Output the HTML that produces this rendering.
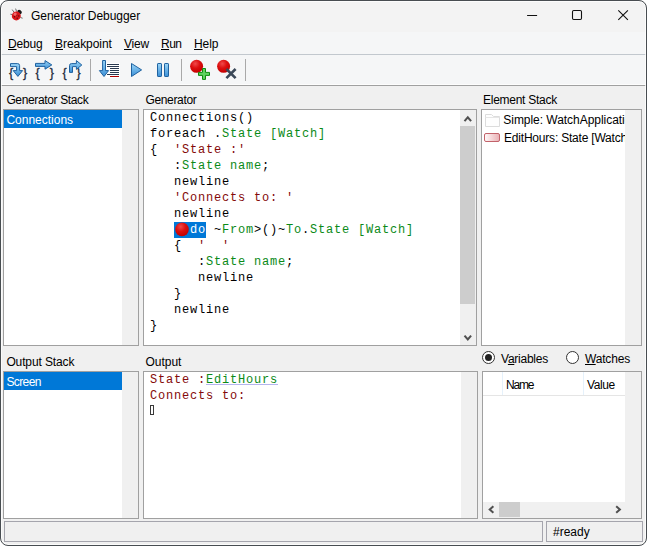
<!DOCTYPE html>
<html>
<head>
<meta charset="utf-8">
<title>Generator Debugger</title>
<style>
html,body{margin:0;padding:0;background:#fff;}
body{width:647px;height:546px;position:relative;overflow:hidden;font-family:"Liberation Sans",sans-serif;font-size:12px;color:#000;}
#c{position:absolute;left:0;top:0;width:647px;height:546px;border-radius:8px;overflow:hidden;background:#f0f0f0;}
#frame{position:absolute;left:0;top:0;width:645px;height:544px;border:1px solid #484d51;border-radius:8px;box-shadow:inset 0 0 0 1px rgba(255,255,255,0.75);pointer-events:none;z-index:50;}
.abs{position:absolute;}
.t{position:absolute;white-space:nowrap;line-height:16px;height:16px;font-size:12px;}
.u{text-decoration:underline;text-underline-offset:1px;text-decoration-thickness:1px;}
.panel{position:absolute;box-sizing:border-box;border:1px solid #a0a0a0;background:#fff;overflow:hidden;}
.sb{position:absolute;background:#f0f0f0;}
.mono{font-family:"Liberation Mono",monospace;font-size:12px;letter-spacing:0.8px;line-height:16px;white-space:pre;position:absolute;color:#000;}
.g{color:#0b8a18;}
.r{color:#850a0a;}
.sel{background:#0078d7;color:#fff;}
.bp{display:inline-block;width:16px;height:16px;vertical-align:top;}
.bp svg{display:block;}
.status{position:absolute;box-sizing:border-box;border:1px solid #a5a5ad;background:#f0f0f0;}
</style>
</head>
<body>
<div id="c">
  <!-- title bar -->
  <div class="abs" id="titlebar" style="left:0;top:0;width:647px;height:32px;background:#f3f3f3;"></div>
  <!-- menu + toolbar bg -->
  <div class="abs" id="menubar" style="left:0;top:32px;width:647px;height:53px;background:#f5f6f7;"></div>
  <div class="abs" style="left:0;top:54px;width:647px;height:1px;background:#c2c8ce;"></div>
  <div class="abs" style="left:0;top:84px;width:647px;height:1px;background:#fdfdfd;"></div>
  <div class="abs" style="left:0;top:85px;width:647px;height:1px;background:#a0a0a0;"></div>

  <!-- app icon (ladybug) -->
  <svg class="abs" style="left:8px;top:6px" width="18" height="18" viewBox="0 0 18 18">
    <g stroke="#333" stroke-width="0.7" fill="none">
      <path d="M6.2 6.5 L4.2 3.6"/><path d="M8.6 5.6 L7.6 2.6"/><path d="M4.4 8.6 L2.4 8.2"/><path d="M12.5 11.5 L14.6 12.2"/>
    </g>
    <ellipse cx="11.6" cy="5.9" rx="2.4" ry="1.9" transform="rotate(40 11.6 5.9)" fill="#1a1a1a"/>
    <circle cx="8.3" cy="9.9" r="4.5" fill="#d9171a"/>
    <circle cx="7.2" cy="8.2" r="1.6" fill="#ef6a6a"/>
    <circle cx="6.4" cy="10.8" r="0.7" fill="#5a0a0a"/><circle cx="9.2" cy="12.3" r="0.7" fill="#5a0a0a"/><circle cx="10.8" cy="10" r="0.7" fill="#5a0a0a"/><circle cx="8.8" cy="9.2" r="0.6" fill="#7a1010"/>
  </svg>
  <span class="t" id="title" style="letter-spacing:-0.05px;left:31px;top:8px;">Generator Debugger</span>

  <!-- caption buttons -->
  <svg class="abs" style="left:520px;top:5px" width="120" height="22" viewBox="0 0 120 22">
    <path d="M7.1 10.5 H17.1" stroke="#111" stroke-width="1.1" fill="none"/>
    <rect x="52.5" y="5.5" width="9" height="9" rx="1.2" stroke="#111" stroke-width="1.1" fill="none"/>
    <path d="M98.3 5.3 L107.9 14.9 M107.9 5.3 L98.3 14.9" stroke="#111" stroke-width="1.1" fill="none"/>
  </svg>

  <!-- menu -->
  <span class="t" id="m1" style="letter-spacing:-0.15px;left:8px;top:36px;"><span class="u">D</span>ebug</span>
  <span class="t" id="m2" style="letter-spacing:-0.05px;left:55px;top:36px;"><span class="u">B</span>reakpoint</span>
  <span class="t" id="m3" style="letter-spacing:-0.2px;left:124px;top:36px;"><span class="u">V</span>iew</span>
  <span class="t" id="m4" style="letter-spacing:-0.55px;left:161px;top:36px;"><span class="u">R</span>un</span>
  <span class="t" id="m5" style="letter-spacing:-0.1px;left:194px;top:36px;"><span class="u">H</span>elp</span>

  <!-- toolbar icons -->
  <svg class="abs" id="tb" style="left:0;top:55px" width="260" height="30" viewBox="0 55 260 30">
    <defs>
      <linearGradient id="bl" x1="0" y1="0" x2="0" y2="1"><stop offset="0" stop-color="#9bd6f8"/><stop offset="1" stop-color="#3a8fd6"/></linearGradient>
      <radialGradient id="rd" cx="0.4" cy="0.3" r="0.7"><stop offset="0" stop-color="#f04a4a"/><stop offset="0.5" stop-color="#dc0f0f"/><stop offset="1" stop-color="#c40000"/></radialGradient>
    </defs>
    <!-- icon 1: step into -->
    <text x="9" y="76.5" font-family="Liberation Sans, sans-serif" font-size="12.5" fill="#1d2b3c" stroke="#1d2b3c" stroke-width="0.3">{</text>
    <text x="23" y="76.5" font-family="Liberation Sans, sans-serif" font-size="12.5" fill="#1d2b3c" stroke="#1d2b3c" stroke-width="0.3">}</text>
    <path d="M10.5 63.6 H17.6 Q19.6 63.6 19.6 65.6 V70.6 H22.6 L17.9 76.4 L13.2 70.6 H16.6 V66.6 H10.5 Z" fill="url(#bl)" stroke="#1f62a0" stroke-width="1" stroke-linejoin="round"/>
    <!-- icon 2: step over -->
    <text x="35.6" y="76.5" font-family="Liberation Sans, sans-serif" font-size="12.5" fill="#1d2b3c" stroke="#1d2b3c" stroke-width="0.3">{</text>
    <text x="49.8" y="76.5" font-family="Liberation Sans, sans-serif" font-size="12.5" fill="#1d2b3c" stroke="#1d2b3c" stroke-width="0.3">}</text>
    <path d="M35.5 63.4 H45 V60.6 L51.8 64.9 L45 69.2 V66.4 H35.5 Z" fill="url(#bl)" stroke="#1f62a0" stroke-width="1" stroke-linejoin="round"/>
    <!-- icon 3: step out -->
    <text x="62.6" y="76.5" font-family="Liberation Sans, sans-serif" font-size="12.5" fill="#1d2b3c" stroke="#1d2b3c" stroke-width="0.3">{</text>
    <text x="76.6" y="76.5" font-family="Liberation Sans, sans-serif" font-size="12.5" fill="#1d2b3c" stroke="#1d2b3c" stroke-width="0.3">}</text>
    <path d="M69.5 72.4 V65.6 Q69.5 63.6 71.5 63.6 H76.4 V60.6 L81.8 65 L76.4 69.4 V66.6 H72.5 V72.4 Z" fill="url(#bl)" stroke="#1f62a0" stroke-width="1" stroke-linejoin="round"/>
    <!-- sep -->
    <rect x="90" y="59" width="1" height="22" fill="#a9a9a9"/>
    <!-- icon 4: run to cursor -->
    <rect x="106" y="63" width="14" height="15" fill="#fff"/>
    <g fill="#2a3a50">
      <rect x="107" y="64" width="12" height="1"/><rect x="107" y="66" width="12" height="1"/>
      <rect x="110" y="68" width="9" height="1"/><rect x="110" y="70" width="9" height="1"/><rect x="110" y="72" width="9" height="1"/>
      <rect x="107" y="74" width="12" height="1"/>
    </g>
    <rect x="110" y="76" width="9" height="1" fill="#b00000"/>
    <path d="M102.6 60.5 H105.5 V70.6 H108.6 L104 76.5 L99.4 70.6 H102.6 Z" fill="url(#bl)" stroke="#1f62a0" stroke-width="1" stroke-linejoin="round"/>
    <!-- play -->
    <path d="M131.5 63.5 L141.6 69.9 L131.5 76.5 Z" fill="url(#bl)" stroke="#1f62a0" stroke-width="1" stroke-linejoin="round"/>
    <!-- pause -->
    <rect x="157.5" y="63.5" width="4" height="13" rx="0.6" fill="url(#bl)" stroke="#1f62a0" stroke-width="1"/>
    <rect x="164.5" y="63.5" width="4" height="13" rx="0.6" fill="url(#bl)" stroke="#1f62a0" stroke-width="1"/>
    <!-- sep -->
    <rect x="181" y="59" width="1" height="22" fill="#a9a9a9"/>
    <!-- add breakpoint -->
    <circle cx="196.6" cy="66.3" r="6.5" fill="url(#rd)"/>
    <path d="M202.5 68.5 H205.5 V72.4 H209.5 V75.4 H205.5 V79.4 H202.5 V75.4 H198.5 V72.4 H202.5 Z" fill="#5fd35f" stroke="#0f8a0f" stroke-width="1" stroke-linejoin="round"/>
    <!-- remove breakpoint -->
    <circle cx="223.6" cy="66.3" r="6.5" fill="url(#rd)"/>
    <path d="M226.4 69 L235.6 78.2 M235.6 69 L226.4 78.2" stroke="#3b4858" stroke-width="2.6" fill="none"/>
    <!-- sep -->
    <rect x="245" y="59" width="1" height="22" fill="#a9a9a9"/>
  </svg>

  <!-- labels -->
  <span class="t" id="l1" style="letter-spacing:-0.36px;left:6.4px;top:92px;">Generator Stack</span>
  <span class="t" id="l2" style="letter-spacing:-0.33px;left:145.4px;top:92px;">Generator</span>
  <span class="t" id="l3" style="letter-spacing:-0.27px;left:483px;top:92px;">Element Stack</span>
  <span class="t" id="l4" style="letter-spacing:-0.12px;left:6.4px;top:354px;">Output Stack</span>
  <span class="t" id="l5" style="left:145.4px;top:354px;">Output</span>

  <!-- Generator stack list -->
  <div class="panel" style="left:3px;top:109px;width:136px;height:237px;">
    <div class="abs sel" style="left:0;top:0;width:118px;height:18px;"></div>
    <div class="sb" style="left:118px;top:0;width:16px;height:235px;"></div>
  </div>
  <span class="t" id="i1" style="left:6.4px;top:111.5px;color:#fff;">Connections</span>

  <!-- Generator code -->
  <div class="panel" style="left:143px;top:109px;width:334px;height:237px;">
    <div class="sb" style="left:316px;top:0;width:16px;height:235px;"></div>
  </div>

  <div class="abs" style="left:174px;top:222px;width:32px;height:16px;background:#0078d7;"></div>
  <svg class="abs" style="left:174px;top:222px" width="16" height="16" viewBox="0 0 16 16"><circle cx="8" cy="7.4" r="6.8" fill="url(#rd)"/></svg>
  <div class="mono" id="code" style="left:150px;top:110px;">Connections()
foreach .<span class="g">State [Watch]</span>
{  <span class="r">'State :'</span>
   :<span class="g">State name</span>;
   newline
   <span class="r">'Connects to: '</span>
   newline
   <span style="color:#fff"><span class="bp"></span>do</span> ~<span class="g">From</span>&gt;()~<span class="g">To</span>.<span class="g">State [Watch]</span>
   {  <span class="r">'  '</span>
      :<span class="g">State name</span>;
      newline
   }
   newline
}</div>
  <!-- generator scrollbar -->
  <svg class="abs" style="left:460px;top:110px" width="16" height="235" viewBox="0 0 16 235">
    <rect x="0" y="16" width="15" height="178" fill="#cdcdcd"/>
    <path d="M4.5 11.2 L7.8 7.3 L11.1 11.2" stroke="#505050" stroke-width="2" fill="none"/>
    <path d="M4.5 225.6 L7.8 229.5 L11.1 225.6" stroke="#505050" stroke-width="2" fill="none"/>
  </svg>

  <!-- Element stack -->
  <div class="panel" style="left:481px;top:109px;width:161px;height:237px;background:#f0f0f0;">
    <div class="abs" style="left:0;top:0;width:143px;height:235px;background:#fff;"></div>
  </div>


  <svg class="abs" style="left:484px;top:112px" width="18" height="32" viewBox="484 112 18 32">
    <defs><linearGradient id="pk" x1="0" y1="0" x2="1" y2="0"><stop offset="0" stop-color="#fffafa"/><stop offset="1" stop-color="#e9b0b4"/></linearGradient></defs>
    <path d="M485.5 126.5 V114.5 H491.5 L493.5 116.5 H499.5 V126.5 Z" fill="#fefefe" stroke="#dcdcdc" stroke-width="1"/>
    <path d="M485.5 117.5 H499.5" stroke="#e6e6e6" stroke-width="1"/>
    <rect x="484.5" y="133.5" width="15" height="8" rx="1.5" fill="url(#pk)" stroke="#c2626a" stroke-width="1"/>
  </svg>
  <div class="abs" style="left:503px;top:110px;width:122px;height:40px;overflow:hidden;">
    <span class="t" id="e1" style="left:0.3px;top:2.3px;letter-spacing:-0.04px;">Simple: WatchApplication</span>
    <span class="t" id="e2" style="left:1px;top:19.8px;letter-spacing:-0.2px;">EditHours: State [Watch]</span>
  </div>

  <!-- Output stack -->
  <div class="panel" style="left:3px;top:371px;width:136px;height:148px;">
    <div class="abs sel" style="left:0;top:0;width:118px;height:18px;"></div>
    <div class="sb" style="left:118px;top:0;width:16px;height:146px;"></div>
  </div>
  <span class="t" id="i2" style="left:6.4px;top:373.5px;color:#fff;letter-spacing:-0.6px;">Screen</span>

  <!-- Output -->
  <div class="panel" style="left:143px;top:371px;width:335px;height:148px;">
    <div class="sb" style="left:317px;top:0;width:16px;height:146px;"></div>
  </div>

  <div class="mono" id="out" style="left:150px;top:372px;"><span class="r">State :</span><span class="g">EditHours</span>
<span class="r">Connects to: </span>
</div>
  <div class="abs" style="left:206px;top:384px;width:72px;height:1px;background:#b4b4ee;"></div>
  <div class="abs" style="left:150px;top:405px;width:4px;height:10px;border:1px solid #3a3a3a;box-sizing:border-box;"></div>

  <!-- Variables -->
  <div class="panel" style="left:482px;top:371px;width:160px;height:148px;background:#f0f0f0;">
    <div class="abs" style="left:0;top:0;width:142px;height:130px;background:#fff;"></div>
  </div>


  <svg class="abs" style="left:480px;top:349px" width="110" height="18" viewBox="480 349 110 18">
    <circle cx="488.5" cy="357.5" r="6" fill="#fff" stroke="#333" stroke-width="1"/>
    <circle cx="488.5" cy="357.5" r="3.5" fill="#222"/>
    <circle cx="572.5" cy="357.5" r="6" fill="#fff" stroke="#333" stroke-width="1"/>
  </svg>
  <span class="t" id="r1" style="left:501px;top:350.5px;letter-spacing:-0.25px;">V<span class="u">a</span>riables</span>
  <span class="t" id="r2" style="left:585px;top:350.5px;letter-spacing:-0.18px;"><span class="u">W</span>atches</span>
  <div class="abs" style="left:502px;top:372px;width:1px;height:23px;background:#e5f1fb;"></div>
  <div class="abs" style="left:583px;top:372px;width:1px;height:23px;background:#e5f1fb;"></div>
  <div class="abs" style="left:483px;top:395px;width:142px;height:1px;background:#e5e5e5;"></div>
  <span class="t" id="h1" style="left:506px;top:376.5px;letter-spacing:-1.2px;">Name</span>
  <span class="t" id="h2" style="left:587px;top:376.5px;letter-spacing:-0.4px;">Value</span>
  <svg class="abs" style="left:483px;top:502px" width="158" height="16" viewBox="483 502 158 16">
    <rect x="499" y="502" width="21" height="15" fill="#cdcdcd"/>
    <path d="M493.4 506.2 L489.7 509.5 L493.4 512.8" stroke="#505050" stroke-width="2" fill="none"/>
    <path d="M616.2 506.2 L619.9 509.5 L616.2 512.8" stroke="#505050" stroke-width="2" fill="none"/>
  </svg>

  <!-- status bar -->
  <div class="status" style="left:4px;top:521px;width:539px;height:21px;"></div>
  <div class="status" style="left:546px;top:521px;width:97px;height:21px;"></div>
  <span class="t" id="st" style="left:553px;top:524px;">#ready</span>
</div>
<div id="frame"></div>
</body>
</html>
